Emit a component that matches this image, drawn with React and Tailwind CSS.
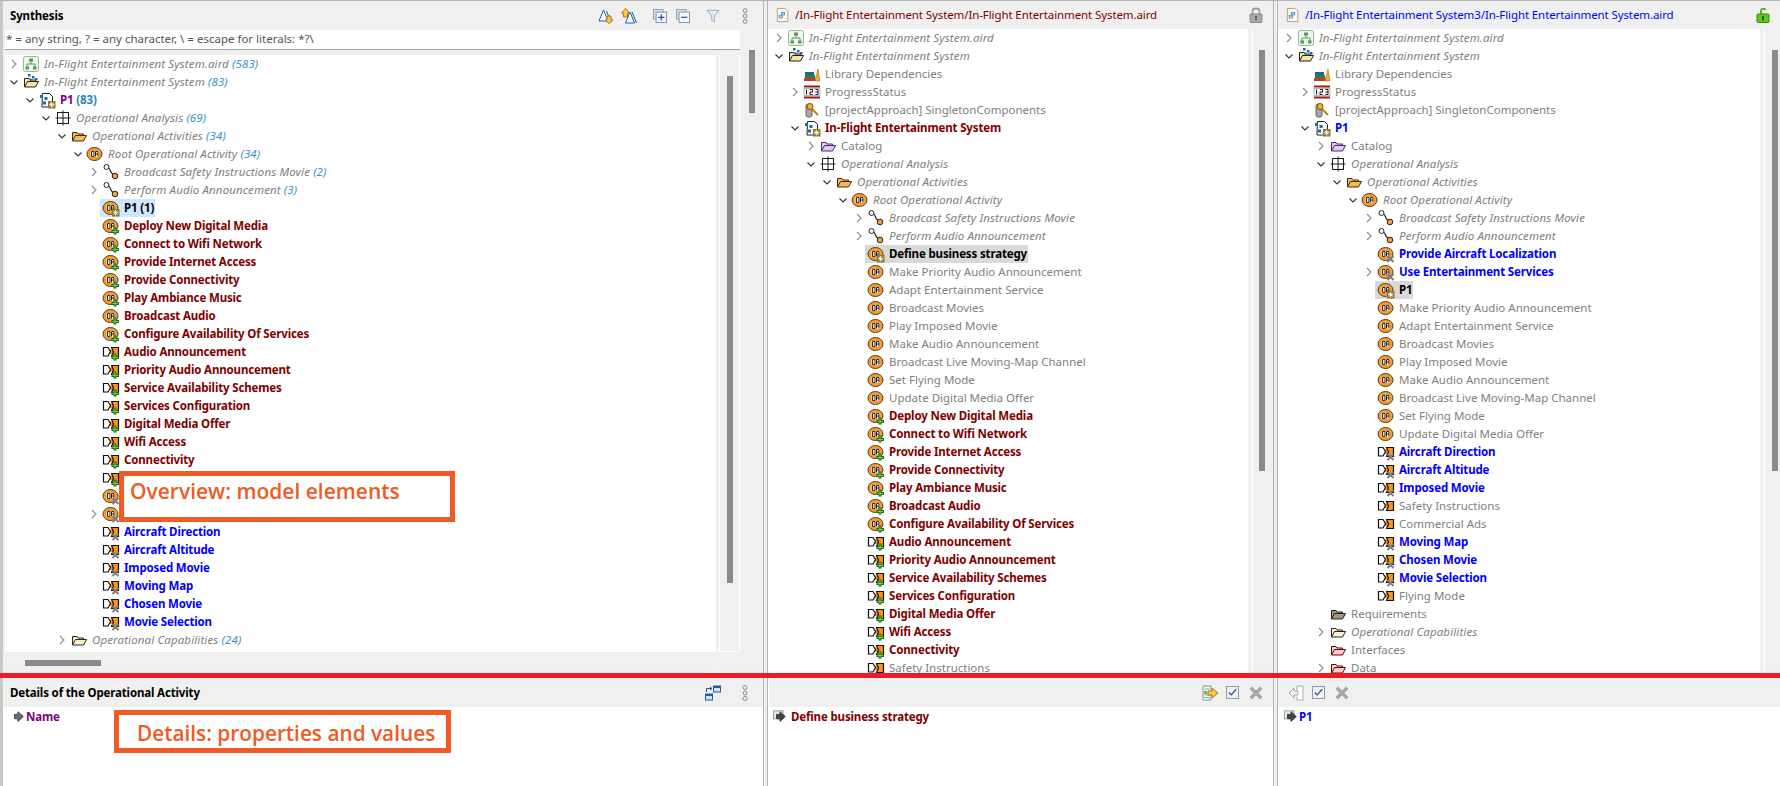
import React from 'react';

const BADGES = {
  plus: (
    <g>
      <path d="M10.5 9.5h3v2.500h2.500v3h-2.500v1.500h-3v-1.500H8.500v-3h2z" fill="#1f6b1f" />
      <path d="M11.500 10.500h1v2.500h2.500v1h-2.500v1.500h-1v-1.500h-2v-1h2z" fill="#7ed04b" />
    </g>
  ),
  x: (
    <g stroke="#7c7c7c" strokeWidth="2">
      <path d="M9.5 10l6 6M15.5 10l-6 6" />
    </g>
  ),
  star: (
    <g>
      <rect x="9" y="9" width="7.5" height="7.5" fill="#8a7a2c" />
      <path d="M12.7 10v5.5M10 12.7h5.5M10.8 10.8l3.8 3.8M14.6 10.8l-3.8 3.8" stroke="#fff" strokeWidth="0.9" />
    </g>
  ),
};

function folder(fill, stroke) {
  return (
    <g stroke={stroke} strokeLinejoin="round">
      <path d="M1.5 13V4.5h4.5l1 1.5h5.5v2" fill={fill} />
      <path d="M1.5 13l3-5.5h11l-3 5.5z" fill={fill} />
    </g>
  );
}

const ICONS = {
  aird: (
    <g>
      <rect x="0.5" y="0.5" width="15" height="15" rx="2" fill="#eef6ee" stroke="#8fbc8f" />
      <path d="M8 5v3M4 11V8h8v3" stroke="#5a9a5a" fill="none" />
      <rect x="6" y="2.5" width="4" height="3" fill="#5a9a5a" />
      <rect x="2.5" y="10.5" width="3.5" height="3" fill="#5a9a5a" />
      <rect x="10" y="10.5" width="3.5" height="3" fill="#5a9a5a" />
    </g>
  ),
  root: (
    <g>
      {folder('#fde3a0', '#222')}
      <g fill="#1c6aa8">
        <rect x="5" y="0" width="2.5" height="2.5" />
        <rect x="9" y="2" width="2.5" height="2.5" />
        <rect x="12" y="4" width="2.5" height="2.5" />
        <rect x="6.5" y="4.5" width="2" height="2" />
      </g>
    </g>
  ),
  project: (
    <g>
      <path d="M3.5 1.500h7l3 3v10.500h-10.500z" fill="#fff" stroke="#222" />
      <g fill="#1c6aa8">
        <rect x="1" y="3" width="3" height="3" />
        <rect x="5.500" y="5" width="3" height="3" />
        <rect x="4" y="9.500" width="3" height="3" />
      </g>
    </g>
  ),
  grid: (
    <g stroke="#1a1a1a" fill="none">
      <rect x="2.500" y="2.500" width="11" height="11" />
      <path d="M8 0.500v15M0.500 8h15" />
    </g>
  ),
  folderOrange: folder('#f9b860', '#40300c'),
  folderCream: folder('#fff2c8', '#222'),
  folderPurple: folder('#e2c9ee', '#4f2a72'),
  folderRed: folder('#f6cfcf', '#6a0000'),
  folderBrown: folder('#a8917a', '#222'),
  oa: (
    <g>
      <ellipse cx="7.500" cy="8" rx="7.500" ry="6.500" fill="#f59a2e" stroke="#5a3a10" />
      <rect x="3.500" y="5" width="8.500" height="6" fill="#fde7c0" />
      <path d="M4.500 5.500h2.500v5H4.500zM8.500 10.500v-5h2.500v5M8.500 8h2.500" fill="none" stroke="#2a2a2a" />
    </g>
  ),
  process: (
    <g>
      <path d="M5 4c2 0 2 2 3 4s2 2.500 3 3" stroke="#222" strokeWidth="1.2" fill="none" />
      <circle cx="3.500" cy="3" r="2.500" fill="#fff" stroke="#222" />
      <circle cx="12" cy="12" r="2.800" fill="#f6a03c" stroke="#222" />
    </g>
  ),
  exchange: (
    <g stroke="#111">
      <rect x="4" y="5.500" width="7" height="4.500" fill="#f7941d" stroke="none" />
      <path d="M0.500 3.500h4.500l2.500 4-2.500 4.500h-4.500z" fill="#fff" strokeWidth="1.200" />
      <path d="M8.500 3.500h7v9h-7l2-4.500z" fill="#f7941d" strokeWidth="1.200" />
    </g>
  ),
  library: (
    <g>
      <rect x="0" y="12" width="12" height="3" fill="#b5432a" />
      <rect x="1" y="9" width="10" height="3" fill="#2f7f52" />
      <rect x="1" y="6" width="9" height="3" fill="#2a5f8f" />
      <path d="M11 15l3-12 2 12z" fill="#f0b030" stroke="#a06a10" strokeWidth="0.600" />
    </g>
  ),
  enum123: (
    <g>
      <rect x="0" y="1.500" width="16" height="2" fill="#a01818" />
      <rect x="0" y="12.500" width="16" height="2" fill="#a01818" />
      <rect x="0" y="4.500" width="16" height="7" fill="#f4f4f4" stroke="#777" strokeWidth="0.500" />
      <path d="M2.500 5.500v5M6 5.500h2.500v2.500H6v2.500h2.500M11.500 5.500H14v5h-2.500M11.500 8H14" stroke="#222" fill="none" />
    </g>
  ),
  key: (
    <g>
      <rect x="2" y="2" width="6" height="13" rx="2" fill="#a8a8a8" stroke="#666" />
      <path d="M5 4l9 9" stroke="#b8821c" strokeWidth="2" />
      <circle cx="6" cy="4.500" r="3" fill="#f0b030" stroke="#7a5410" />
    </g>
  ),
};

function Ico({ name, badge }) {
  return (
    <svg viewBox="0 0 16 16" className="w-4 h-4 overflow-visible shrink-0">
      {ICONS[name]}
      {badge && BADGES[badge]}
    </svg>
  );
}

function Chevron({ open }) {
  return (
    <svg viewBox="0 0 10 10" className="w-[10px] h-[10px]">
      {open ? (
        <path d="M1.500 3.500L5 7l3.500-3.500" fill="none" stroke="#333" strokeWidth="1.100" />
      ) : (
        <path d="M3 1l4 4-4 4" fill="none" stroke="#8c8c8c" strokeWidth="1.100" />
      )}
    </svg>
  );
}

const KIND = {
  gray: 'text-[#808080]',
  ital: 'italic text-[#808080] tracking-[0.12px]',
  maroon: 'font-bold text-[#800000] tracking-[-0.15px]',
  blue: 'font-bold text-[#0000ff] tracking-[-0.15px]',
  purple: 'font-bold text-[#800080] tracking-[-0.15px]',
  black: 'font-bold text-black tracking-[-0.15px]',
};

function Row({ base, d, chev, icon, badge, label, kind = 'gray', count, sel }) {
  const selCls = sel === 'blue' ? 'bg-[#cce8ff]' : sel === 'gray' ? 'bg-[#d9d9d9]' : '';
  return (
    <div className="flex items-center h-[18px] whitespace-nowrap" style={{ paddingLeft: base + d * 16 }}>
      <span className="w-[14px] flex justify-center shrink-0">
        {chev && <Chevron open={chev === 'v'} />}
      </span>
      <span className={`flex items-center h-[18px] ml-[-1px] pl-[3px] pr-[1px] ${selCls}`}>
        <Ico name={icon} badge={badge} />
        <span className={`ml-[5px] ${KIND[kind]}`}>
          {label}
          {count && (
            <span className={kind === 'ital' ? 'text-[#3a94c4]' : kind === 'purple' ? 'text-[#2a86b8]' : ''}> ({count})</span>
          )}
        </span>
      </span>
    </div>
  );
}

const oa = (label, kind, badge, chev) => ({ d: 5, icon: 'oa', label, kind, badge, chev });
const ex = (label, kind, badge) => ({ d: 5, icon: 'exchange', label, kind, badge });

const LEFT_ROWS = [
  { d: 0, chev: '>', icon: 'aird', label: 'In-Flight Entertainment System.aird', kind: 'ital', count: '583' },
  { d: 0, chev: 'v', icon: 'root', label: 'In-Flight Entertainment System', kind: 'ital', count: '83' },
  { d: 1, chev: 'v', icon: 'project', badge: 'star', label: 'P1', kind: 'purple', count: '83' },
  { d: 2, chev: 'v', icon: 'grid', label: 'Operational Analysis', kind: 'ital', count: '69' },
  { d: 3, chev: 'v', icon: 'folderOrange', label: 'Operational Activities', kind: 'ital', count: '34' },
  { d: 4, chev: 'v', icon: 'oa', label: 'Root Operational Activity', kind: 'ital', count: '34' },
  { d: 5, chev: '>', icon: 'process', label: 'Broadcast Safety Instructions Movie', kind: 'ital', count: '2' },
  { d: 5, chev: '>', icon: 'process', label: 'Perform Audio Announcement', kind: 'ital', count: '3' },
  { d: 5, icon: 'oa', badge: 'star', label: 'P1', kind: 'black', count: '1', sel: 'blue' },
  oa('Deploy New Digital Media', 'maroon', 'plus'),
  oa('Connect to Wifi Network', 'maroon', 'plus'),
  oa('Provide Internet Access', 'maroon', 'plus'),
  oa('Provide Connectivity', 'maroon', 'plus'),
  oa('Play Ambiance Music', 'maroon', 'plus'),
  oa('Broadcast Audio', 'maroon', 'plus'),
  oa('Configure Availability Of Services', 'maroon', 'plus'),
  ex('Audio Announcement', 'maroon', 'plus'),
  ex('Priority Audio Announcement', 'maroon', 'plus'),
  ex('Service Availability Schemes', 'maroon', 'plus'),
  ex('Services Configuration', 'maroon', 'plus'),
  ex('Digital Media Offer', 'maroon', 'plus'),
  ex('Wifi Access', 'maroon', 'plus'),
  ex('Connectivity', 'maroon', 'plus'),
  ex('', 'maroon', 'plus'),
  oa('', 'blue', 'x'),
  oa('', 'blue', 'x', '>'),
  ex('Aircraft Direction', 'blue', 'x'),
  ex('Aircraft Altitude', 'blue', 'x'),
  ex('Imposed Movie', 'blue', 'x'),
  ex('Moving Map', 'blue', 'x'),
  ex('Chosen Movie', 'blue', 'x'),
  ex('Movie Selection', 'blue', 'x'),
  { d: 3, chev: '>', icon: 'folderCream', label: 'Operational Capabilities', kind: 'ital', count: '24' },
];

const COMMON_HEAD = [
  { d: 0, chev: '>', icon: 'aird', label: 'In-Flight Entertainment System.aird', kind: 'ital' },
  { d: 0, chev: 'v', icon: 'root', label: 'In-Flight Entertainment System', kind: 'ital' },
  { d: 1, icon: 'library', label: 'Library Dependencies' },
  { d: 1, chev: '>', icon: 'enum123', label: 'ProgressStatus' },
  { d: 1, icon: 'key', label: '[projectApproach] SingletonComponents' },
];

const COMMON_ANALYSIS = [
  { d: 2, chev: '>', icon: 'folderPurple', label: 'Catalog' },
  { d: 2, chev: 'v', icon: 'grid', label: 'Operational Analysis', kind: 'ital' },
  { d: 3, chev: 'v', icon: 'folderOrange', label: 'Operational Activities', kind: 'ital' },
  { d: 4, chev: 'v', icon: 'oa', label: 'Root Operational Activity', kind: 'ital' },
  { d: 5, chev: '>', icon: 'process', label: 'Broadcast Safety Instructions Movie', kind: 'ital' },
  { d: 5, chev: '>', icon: 'process', label: 'Perform Audio Announcement', kind: 'ital' },
];

const GRAY_ACTIVITIES = [
  'Make Priority Audio Announcement',
  'Adapt Entertainment Service',
  'Broadcast Movies',
  'Play Imposed Movie',
  'Make Audio Announcement',
  'Broadcast Live Moving-Map Channel',
  'Set Flying Mode',
  'Update Digital Media Offer',
].map((l) => oa(l, 'gray'));

const MIDDLE_ROWS = [
  ...COMMON_HEAD,
  { d: 1, chev: 'v', icon: 'project', badge: 'star', label: 'In-Flight Entertainment System', kind: 'maroon' },
  ...COMMON_ANALYSIS,
  { d: 5, icon: 'oa', badge: 'star', label: 'Define business strategy', kind: 'black', sel: 'gray' },
  ...GRAY_ACTIVITIES,
  oa('Deploy New Digital Media', 'maroon', 'plus'),
  oa('Connect to Wifi Network', 'maroon', 'plus'),
  oa('Provide Internet Access', 'maroon', 'plus'),
  oa('Provide Connectivity', 'maroon', 'plus'),
  oa('Play Ambiance Music', 'maroon', 'plus'),
  oa('Broadcast Audio', 'maroon', 'plus'),
  oa('Configure Availability Of Services', 'maroon', 'plus'),
  ex('Audio Announcement', 'maroon', 'plus'),
  ex('Priority Audio Announcement', 'maroon', 'plus'),
  ex('Service Availability Schemes', 'maroon', 'plus'),
  ex('Services Configuration', 'maroon', 'plus'),
  ex('Digital Media Offer', 'maroon', 'plus'),
  ex('Wifi Access', 'maroon', 'plus'),
  ex('Connectivity', 'maroon', 'plus'),
  ex('Safety Instructions', 'gray'),
];

const RIGHT_ROWS = [
  ...COMMON_HEAD,
  { d: 1, chev: 'v', icon: 'project', badge: 'star', label: 'P1', kind: 'blue' },
  ...COMMON_ANALYSIS,
  oa('Provide Aircraft Localization', 'blue', 'x'),
  oa('Use Entertainment Services', 'blue', 'x', '>'),
  { d: 5, icon: 'oa', badge: 'star', label: 'P1', kind: 'black', sel: 'gray' },
  ...GRAY_ACTIVITIES,
  ex('Aircraft Direction', 'blue', 'x'),
  ex('Aircraft Altitude', 'blue', 'x'),
  ex('Imposed Movie', 'blue', 'x'),
  ex('Safety Instructions', 'gray'),
  ex('Commercial Ads', 'gray'),
  ex('Moving Map', 'blue', 'x'),
  ex('Chosen Movie', 'blue', 'x'),
  ex('Movie Selection', 'blue', 'x'),
  ex('Flying Mode', 'gray'),
  { d: 2, icon: 'folderBrown', label: 'Requirements' },
  { d: 2, chev: '>', icon: 'folderCream', label: 'Operational Capabilities', kind: 'ital' },
  { d: 2, icon: 'folderRed', label: 'Interfaces' },
  { d: 2, chev: '>', icon: 'folderRed', label: 'Data' },
];

function ToolSvg({ children, cls = 'w-4 h-4' }) {
  return (
    <svg viewBox="0 0 16 16" className={`${cls} shrink-0`}>
      {children}
    </svg>
  );
}

const TriangleDown = () => (
  <ToolSvg>
    <path d="M5.500 2L1 13h9z" fill="#fff" stroke="#1c5f9e" />
    <path d="M8.500 3l4 10" stroke="#1c5f9e" />
    <path d="M9 8v4H7l4 3.500 4-3.500h-2V8z" fill="#f6c94c" stroke="#a8761a" />
  </ToolSvg>
);

const TriangleUp = () => (
  <ToolSvg>
    <path d="M9 4L4.500 15h9z" fill="#fff" stroke="#1c5f9e" />
    <path d="M11 4l4.500 11" stroke="#1c5f9e" />
    <path d="M2.500 9V5H0.500L4.500 0.500 8.500 5h-2v4z" fill="#f6c94c" stroke="#a8761a" />
  </ToolSvg>
);

const BoxSign = ({ plus }) => (
  <ToolSvg cls="w-[14px] h-[14px]">
    <rect x="0.500" y="0.500" width="11" height="11" fill="#d6e2ee" stroke="#7f9ab5" />
    <rect x="3.500" y="3.500" width="12" height="12" fill="#f4f8fc" stroke="#6f8ba8" />
    <path d={plus ? 'M6 9.500h7M9.500 6v7' : 'M6 9.500h7'} stroke="#1f5b8f" strokeWidth="1.400" />
  </ToolSvg>
);

const Funnel = () => (
  <ToolSvg cls="w-[14px] h-4">
    <path d="M1 1.500h14L9.500 8v7l-3-2V8z" fill="#dbeaf7" stroke="#8fa9c2" />
  </ToolSvg>
);

const Dots = () => (
  <svg viewBox="0 0 6 16" className="w-[6px] h-4">
    <g fill="none" stroke="#8c8c8c">
      <circle cx="3" cy="2.500" r="2" />
      <circle cx="3" cy="8" r="2" />
      <circle cx="3" cy="13.500" r="2" />
    </g>
  </svg>
);

const AirdDoc = () => (
  <ToolSvg cls="w-[14px] h-4">
    <path d="M1.500 0.500h9l3 3v12h-12z" fill="#fbfbf6" stroke="#b09a5c" />
    <rect x="6" y="5" width="4" height="3" fill="#a8cbe8" stroke="#3d7fb5" strokeWidth="0.700" />
    <rect x="3.500" y="8.500" width="4" height="3" fill="#a8cbe8" stroke="#3d7fb5" strokeWidth="0.700" />
  </ToolSvg>
);

const Lock = ({ open }) => (
  <ToolSvg>
    <path
      d={open ? 'M6 7V3.500C6 1.500 10 1 10.500 3' : 'M4.500 7V4c0-3.500 7-3.500 7 0v3'}
      fill="none"
      stroke={open ? '#3f9a0c' : '#9a9a9a'}
      strokeWidth="1.600"
    />
    <rect x="2" y="7" width="12" height="8.500" rx="1" fill={open ? '#62c614' : '#a8a8a8'} stroke={open ? '#3f8a0c' : '#8c8c8c'} />
    <rect x="7" y="9" width="2" height="4.500" fill={open ? '#1f5f08' : '#6c6c6c'} />
  </ToolSvg>
);

const CheckBox = () => (
  <ToolSvg cls="w-[13px] h-[13px]">
    <rect x="0.500" y="0.500" width="15" height="15" fill="#eef2f7" stroke="#8194ad" strokeWidth="1.200" />
    <path d="M3.500 8l3 3 6-7" fill="none" stroke="#30507c" strokeWidth="1.500" />
  </ToolSvg>
);

const GrayX = () => (
  <ToolSvg cls="w-[14px] h-[14px]">
    <path d="M2 2l12 12M14 2L2 14" stroke="#a6a6a6" strokeWidth="4" />
  </ToolSvg>
);

const DocArrow = () => (
  <ToolSvg>
    <path d="M1 1h8v14H1z" fill="#f4f4ea" stroke="#8f9a7c" />
    <path d="M2.500 4h5M2.500 7h3M2.500 10h5M2.500 12.500h5" stroke="#7aa0c8" />
    <rect x="2" y="6" width="3" height="3" fill="#7cbc3c" />
    <path d="M6 6h4V3l6 5-6 5v-3H6z" fill="#f6c94c" stroke="#a8761a" />
  </ToolSvg>
);

const BackDoc = () => (
  <ToolSvg>
    <path d="M9 6V1h6v14H9v-3" fill="#fff" stroke="#aaa" />
    <path d="M10 6H6V3L1 8l5 5v-3h4z" fill="#f4f4f4" stroke="#aaa" />
  </ToolSvg>
);

const SplitPanes = () => (
  <svg viewBox="0 0 16 16" className="w-[16px] h-[16px]">
    <rect x="8.500" y="1" width="7" height="6" fill="#cfe3f4" stroke="#1c5f9e" />
    <rect x="0.500" y="9" width="7" height="6" fill="#cfe3f4" stroke="#1c5f9e" />
    <rect x="8.500" y="1" width="7" height="2" fill="#1c5f9e" />
    <rect x="0.500" y="9" width="7" height="2" fill="#1c5f9e" />
    <path d="M1.500 7V3.500h5M5 2l2 1.500L5 5" fill="none" stroke="#1c4f8e" />
  </svg>
);

function PropIcon({ plain }) {
  return (
    <svg viewBox="0 0 16 16" className="w-[14px] h-[14px] shrink-0">
      {!plain && <rect x="0.500" y="1" width="11" height="9" fill="#dfe9f2" stroke="#8a9a8a" />}
      <path d="M4 5h4V2l6 5.500L8 13v-3H4z" fill={plain ? '#6c7078' : '#3d4450'} stroke="#333" />
    </svg>
  );
}

function Tree({ rows, base }) {
  return (
    <div className="h-full overflow-hidden bg-white">
      {rows.map((r, i) => (
        <Row key={i} base={base} {...r} />
      ))}
    </div>
  );
}

function EditorPane({ width, title, titleCls, rows, treeW, lock, thumbGap }) {
  return (
    <div className={`${width} h-full flex flex-col shrink-0`}>
      <div className="h-[28px] flex items-center pl-[8px] pr-[2px] shrink-0">
        <AirdDoc />
        <span className={`ml-[5px] tracking-[-0.1px] ${titleCls}`}>{title}</span>
        <span className="ml-auto mr-[7px]">
          <Lock open={lock === 'open'} />
        </span>
      </div>
      <div className="flex flex-1 min-h-0">
        <div className={`${treeW} h-full`}>
          <Tree rows={rows} base={4} />
        </div>
        <div className="w-[5px] border-r border-white shrink-0" />
        <div className={`flex-1 ${thumbGap}`}>
          <div className="mt-[21px] w-[6px] h-[421px] bg-[#8a8a8a]" />
        </div>
      </div>
    </div>
  );
}

const Divider = () => <div className="w-[5px] shrink-0 border-x border-[#b4b4b4] h-full bg-[#f0f0f0]" />;

export default function App() {
  return (
    <div className="relative w-[1780px] h-[786px] overflow-hidden bg-[#f0f0f0] text-[11.5px] leading-[18px] text-black font-['Noto_Sans',sans-serif]">
      {/* top half: the three tree panes */}
      <div className="flex h-[678px] border-t border-[#b4b4b4]">
        <div className="w-[763px] h-full flex flex-col shrink-0 border-l-[3px] border-[#c8c8c8]">
          <div className="h-[29px] flex items-center pl-[7px] shrink-0">
            <span className="font-bold tracking-[-0.15px]">Synthesis</span>
            <div className="ml-auto flex items-center mr-[15px]">
              <TriangleDown />
              <span className="ml-[7px]">
                <TriangleUp />
              </span>
              <span className="ml-[16px]">
                <BoxSign plus />
              </span>
              <span className="ml-[9px]">
                <BoxSign />
              </span>
              <span className="ml-[16px]">
                <Funnel />
              </span>
              <span className="ml-[22px]">
                <Dots />
              </span>
            </div>
          </div>
          <div className="flex flex-1 min-h-0">
            <div className="w-[737px] flex flex-col pl-[2px] shrink-0">
              <div className="h-[20px] bg-white border-b border-[#a0a0a0] pl-[1px] text-[#555] shrink-0 leading-[17px]">
                {'* = any string, ? = any character, \\ = escape for literals: *?\\'}
              </div>
              <div className="flex h-[597px] mt-[5px] shrink-0">
                <div className="w-[712px] h-full">
                  <Tree rows={LEFT_ROWS} base={2} />
                </div>
                <div className="w-[21px] ml-[3px] border-l border-r border-b border-white pl-[7px]">
                  <div className="mt-[21px] w-[6px] h-[507px] bg-[#8a8a8a]" />
                </div>
              </div>
              <div className="pl-[20px] pt-[8px]">
                <div className="w-[76px] h-[6px] bg-[#8a8a8a]" />
              </div>
            </div>
            <div className="flex-1 pl-[9px]">
              <div className="mt-[20px] w-[6px] h-[63px] bg-[#8a8a8a]" />
            </div>
          </div>
        </div>
        <Divider />
        <EditorPane
          width="w-[505px]"
          title="/In-Flight Entertainment System/In-Flight Entertainment System.aird"
          titleCls="text-[#800000]"
          rows={MIDDLE_ROWS}
          treeW="w-[480px]"
          lock="closed"
          thumbGap="pl-[6px]"
        />
        <Divider />
        <EditorPane
          width="flex-1 min-w-0"
          title="/In-Flight Entertainment System3/In-Flight Entertainment System.aird"
          titleCls="text-[#0000ff]"
          rows={RIGHT_ROWS}
          treeW="w-[482px]"
          lock="open"
          thumbGap="pl-[7px]"
        />
      </div>

      {/* bottom half: the property panes */}
      <div className="flex h-[108px]">
        <div className="w-[763px] h-full flex flex-col shrink-0 border-l-[3px] border-[#c8c8c8] bg-white">
          <div className="h-[29px] bg-[#f0f0f0] flex items-center pl-[7px] shrink-0">
            <span className="font-bold tracking-[-0.15px]">Details of the Operational Activity</span>
            <div className="ml-auto flex items-center mr-[15px]">
              <SplitPanes />
              <span className="ml-[21px]">
                <Dots />
              </span>
            </div>
          </div>
          <div className="flex items-center pl-[8px] pt-[1px]">
            <PropIcon plain />
            <span className="ml-[1px] font-bold tracking-[-0.15px] text-[#800080]">Name</span>
          </div>
        </div>
        <Divider />
        <div className="w-[505px] h-full flex flex-col shrink-0 bg-white">
          <div className="h-[29px] bg-[#f0f0f0] flex items-center justify-end pr-[10px] shrink-0 ml-[1px]">
            <DocArrow />
            <span className="ml-[8px]">
              <CheckBox />
            </span>
            <span className="ml-[10px]">
              <GrayX />
            </span>
          </div>
          <div className="flex items-center pl-[5px] pt-[1px]">
            <PropIcon />
            <span className="ml-[4px] font-bold tracking-[-0.15px] text-[#800000]">Define business strategy</span>
          </div>
        </div>
        <Divider />
        <div className="flex-1 h-full flex flex-col bg-white">
          <div className="h-[29px] bg-[#f0f0f0] flex items-center pl-[10px] shrink-0">
            <BackDoc />
            <span className="ml-[8px]">
              <CheckBox />
            </span>
            <span className="ml-[10px]">
              <GrayX />
            </span>
          </div>
          <div className="flex items-center pl-[6px] pt-[1px]">
            <PropIcon />
            <span className="ml-[1px] font-bold tracking-[-0.15px] text-[#0000ff]">P1</span>
          </div>
        </div>
      </div>

      {/* annotations pasted over the screenshot */}
      <div className="absolute left-0 right-0 top-[673px] h-[5px] bg-[#ed1c24]" />
      <div className="absolute left-[119px] top-[471px] w-[336px] h-[51px] border-[5px] border-[#f15a24] bg-white pl-[6px] font-['Open_Sans',sans-serif] font-semibold text-[21px] leading-[30px] text-[#f15a24] whitespace-nowrap">
        Overview: model elements
      </div>
      <div className="absolute left-[114px] top-[710px] w-[337px] h-[43px] border-[5px] border-[#f15a24] bg-white pl-[18px] font-['Open_Sans',sans-serif] font-semibold text-[20.8px] leading-[36px] text-[#f15a24] whitespace-nowrap">
        Details: properties and values
      </div>
    </div>
  );
}
